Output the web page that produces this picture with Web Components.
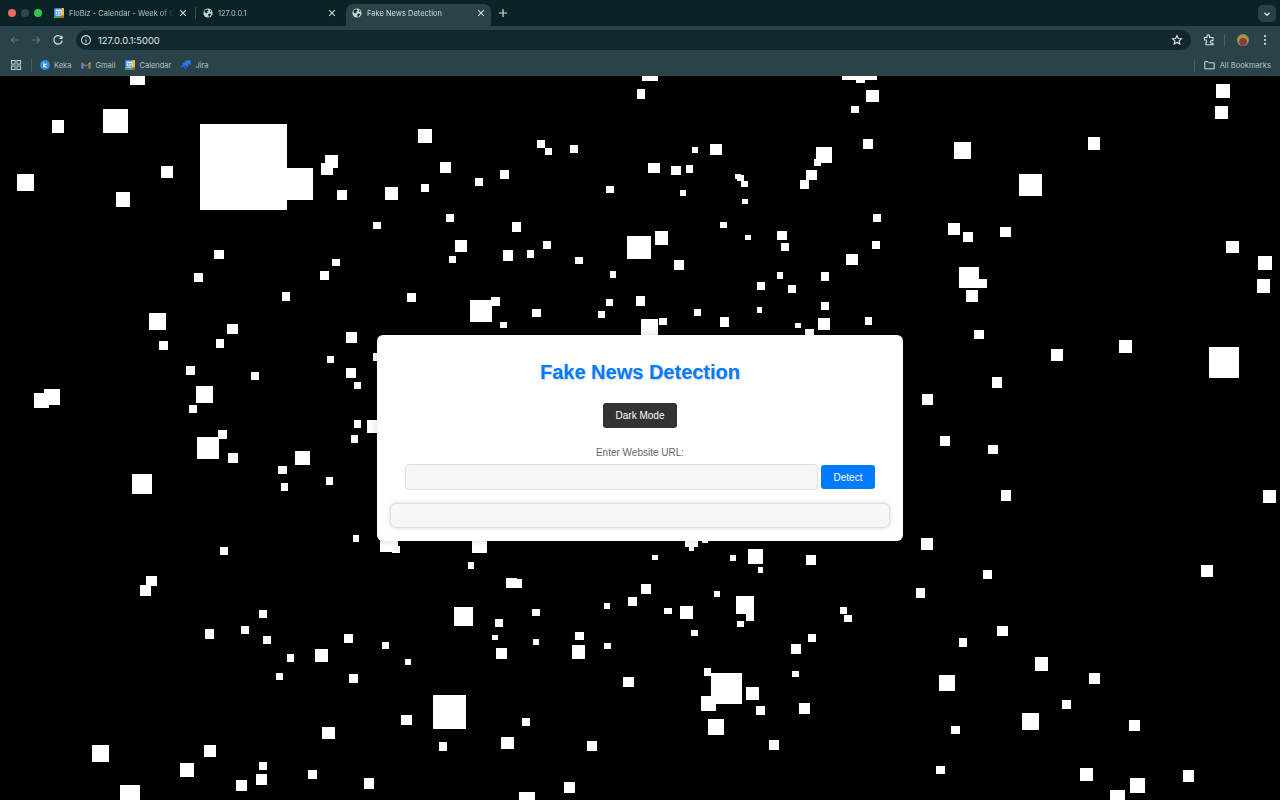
<!DOCTYPE html>
<html>
<head>
<meta charset="utf-8">
<title>Fake News Detection</title>
<style>
  html, body { margin: 0; padding: 0; height: 100%; background: #000; overflow: hidden; }
  body { font-family: "Liberation Sans", Arial, sans-serif; }
</style>
</head>
<body>
<browser-frame>
  <particle-field>
    <detect-card></detect-card>
  </particle-field>
</browser-frame>

<script>
const CALENDAR_ICON = `
  <svg viewBox="0 0 10 10" width="10" height="10">
    <rect width="10" height="10" rx="1" fill="#2f7cf0"/>
    <rect x="7.6" y="0" width="2.4" height="7.6" fill="#f4c20d"/>
    <rect x="0" y="7.6" width="7.6" height="2.4" fill="#34a853"/>
    <rect x="7.6" y="7.6" width="2.4" height="2.4" fill="#ea4335"/>
    <rect x="1.6" y="1.6" width="6" height="6" fill="#fff"/>
    <text x="4.6" y="6.6" font-size="5" font-weight="700" text-anchor="middle" fill="#2f6fd8" font-family="Liberation Sans">31</text>
  </svg>`;

const GLOBE_ICON = `
  <svg viewBox="0 0 10 10" width="10" height="10">
    <circle cx="5" cy="5" r="4.6" fill="#c9d2d4"/>
    <path d="M2 2.2 L4.6 1.2 L5.6 2.6 L4.2 3.8 L4.6 5 L3 5.2 L1.4 4 Z M5.2 6 L7.2 5.6 L8 6.6 L6.6 8.8 L5.6 8.4 Z M7 1.8 L8.6 3.6 L7.2 4 Z" fill="#0d2428"/>
  </svg>`;

class ChromeTab extends HTMLElement {
  constructor() {
    super();
    this.attachShadow({ mode: "open" });
  }

  connectedCallback() {
    this.shadowRoot.innerHTML = `
      <style>
        :host {
          display: flex;
          align-items: center;
          box-sizing: border-box;
          width: 145px;
          height: 22px;
          padding: 0 4px 4px 6px;
          color: #b7c2c4;
          font-size: 7.5px;
          border-radius: 7px 7px 0 0;
        }
        :host([active]) {
          background: #2a4348;
          color: #d6dedf;
        }
        .icon { width: 10px; height: 10px; flex: none; margin-right: 5px; }
        .title {
          flex: 1;
          white-space: nowrap;
          overflow: hidden;
          -webkit-mask-image: linear-gradient(90deg, #000 88%, transparent);
        }
        .close { flex: none; width: 12px; height: 12px; margin-left: 3px; }
      </style>
      <span class="icon">${this.getAttribute("icon") === "calendar" ? CALENDAR_ICON : GLOBE_ICON}</span>
      <span class="title"><slot></slot></span>
      <svg class="close" viewBox="0 0 12 12"><path d="M3.2 3.2 L8.8 8.8 M8.8 3.2 L3.2 8.8" stroke="#d5dcdd" stroke-width="1.1"/></svg>`;
  }
}

class BookmarkItem extends HTMLElement {
  constructor() {
    super();
    this.attachShadow({ mode: "open" });
  }

  connectedCallback() {
    this.shadowRoot.innerHTML = `
      <style>
        :host {
          display: flex;
          align-items: center;
          gap: 4px;
          color: #b7c2c4;
          font-size: 7.5px;
          white-space: nowrap;
        }
      </style>
      <slot name="icon"></slot>
      <slot></slot>`;
  }
}

class BrowserFrame extends HTMLElement {
  constructor() {
    super();
    this.attachShadow({ mode: "open" });
  }

  connectedCallback() {
    this.shadowRoot.innerHTML = `
      <style>
        :host {
          display: flex;
          flex-direction: column;
          width: 1280px;
          height: 800px;
          font-family: "Inter", "Liberation Sans", sans-serif;
        }
        .tabstrip {
          flex: none;
          height: 26px;
          box-sizing: border-box;
          padding: 4px 4px 0 8px;
          display: flex;
          align-items: flex-start;
          background: #0b2227;
        }
        .lights { display: flex; gap: 5px; width: 40px; padding-top: 5px; }
        .lights i { width: 8px; height: 8px; border-radius: 50%; }
        .tabs { display: flex; gap: 4px; }
        .sep { width: 1px; height: 12px; background: #3a4e52; margin: 3px -2.5px 0 -2.5px; align-self: flex-start; }
        .plus { margin: 2px 0 0 5px; width: 14px; height: 14px; }
        .more {
          margin: 1px 0 0 auto;
          width: 18px;
          height: 17px;
          border-radius: 5px;
          background: #2a4146;
          display: grid;
          place-items: center;
        }
        .toolbar {
          flex: none;
          height: 26px;
          box-sizing: border-box;
          padding: 2px 8px 0;
          display: flex;
          align-items: center;
          background: #2a4348;
        }
        .nav { display: flex; align-items: center; gap: 8px; width: 68px; }
        .nav svg { width: 14px; height: 14px; flex: none; }
        .omni {
          width: 1116px;
          height: 20px;
          border-radius: 10px;
          background: #10282d;
          display: flex;
          align-items: center;
          box-sizing: border-box;
          padding: 0 6px 0 4px;
          color: #e2e8e9;
          font-size: 9.4px;
        }
        .omni .info { width: 12px; height: 12px; margin-right: 6px; flex: none; }
        .omni .star { margin-left: auto; width: 12px; height: 12px; margin-right: 2px; }
        .actions { display: flex; align-items: center; margin-left: 11px; flex: none; }
        .bar-sep { width: 1px; height: 13px; background: #4a5f63; }
        .avatar { width: 12px; height: 12px; border-radius: 50%; background: radial-gradient(circle at 50% 65%, #8c3b45 0 35%, #b59a3c 45%, #5f7a4e 100%); }
        .bookmarks {
          flex: none;
          height: 24px;
          box-sizing: border-box;
          padding: 2px 9px 0 10px;
          display: flex;
          align-items: center;
          background: #2a4348;
        }
        .bookmarks .grid { width: 12px; height: 12px; flex: none; }
        .bookmarks .bar-sep { margin: 0 8px 0 9px; }
        .items { display: flex; gap: 10px; }
        .right { margin-left: auto; display: flex; align-items: center; }
        .right .bar-sep { margin: 0 9px 0 0; }
        .right .all { display: flex; align-items: center; gap: 5px; color: #b7c2c4; font-size: 7.6px; }
        main { flex: 1; min-height: 0; display: flex; }
        ::slotted(particle-field) { flex: 1; }
      </style>

      <div class="tabstrip">
        <div class="lights">
          <i style="background:#ec6a5e"></i>
          <i style="background:#33464a"></i>
          <i style="background:#3ec24f"></i>
        </div>
        <div class="tabs">
          <chrome-tab icon="calendar">FloBiz - Calendar - Week of October</chrome-tab>
          <div class="sep"></div>
          <chrome-tab>127.0.0.1</chrome-tab>
          <chrome-tab active>Fake News Detection</chrome-tab>
        </div>
        <svg class="plus" viewBox="0 0 14 14"><path d="M7 3 V11 M3 7 H11" stroke="#d5dcdd" stroke-width="1.2"/></svg>
        <div class="more">
          <svg width="10" height="10" viewBox="0 0 10 10"><path d="M2.5 3.8 L5 6.3 L7.5 3.8" fill="none" stroke="#e2e8e9" stroke-width="1.3"/></svg>
        </div>
      </div>

      <div class="toolbar">
        <div class="nav">
          <svg viewBox="0 0 14 14"><path d="M11 7 H3.5 M6.5 3.8 L3.3 7 L6.5 10.2" fill="none" stroke="#5f7377" stroke-width="1.2"/></svg>
          <svg viewBox="0 0 14 14" style="margin-left:-1px"><path d="M3 7 H10.5 M7.5 3.8 L10.7 7 L7.5 10.2" fill="none" stroke="#5f7377" stroke-width="1.2"/></svg>
          <svg viewBox="0 0 14 14"><path d="M10.8 5 A4.2 4.2 0 1 0 11.2 7.6 M11 2.8 V5.4 H8.4" fill="none" stroke="#d5dcdd" stroke-width="1.2"/></svg>
        </div>
        <div class="omni">
          <svg class="info" viewBox="0 0 12 12"><circle cx="6" cy="6" r="4.4" fill="none" stroke="#d5dcdd" stroke-width="1.1"/><path d="M6 5.4 V8.6 M6 3.4 V4.5" stroke="#d5dcdd" stroke-width="1.1"/></svg>
          <span>127.0.0.1:5000</span>
          <svg class="star" viewBox="0 0 12 12"><path d="M6 1.6 L7.3 4.5 L10.5 4.8 L8.1 6.9 L8.8 10 L6 8.4 L3.2 10 L3.9 6.9 L1.5 4.8 L4.7 4.5 Z" fill="none" stroke="#e2e8e9" stroke-width="1.1"/></svg>
        </div>
        <div class="actions">
          <svg width="14" height="14" viewBox="0 0 14 14"><path d="M2.5 4.5 H5 V3.2 A1.3 1.3 0 0 1 7.6 3.2 V4.5 H11 V7.6 H9.8 A1.3 1.3 0 0 0 9.8 10.2 H11 V11.8 H4 V9.6 A1.3 1.3 0 0 0 4 7.4 V7 H2.5 Z" fill="none" stroke="#d5dcdd" stroke-width="1.1"/></svg>
          <span class="bar-sep" style="margin:0 12px 0 8px"></span>
          <span class="avatar"></span>
          <svg width="14" height="14" viewBox="0 0 14 14" style="margin-left:9px"><circle cx="7" cy="3.2" r="1.1" fill="#d5dcdd"/><circle cx="7" cy="7" r="1.1" fill="#d5dcdd"/><circle cx="7" cy="10.8" r="1.1" fill="#d5dcdd"/></svg>
        </div>
      </div>

      <div class="bookmarks">
        <svg class="grid" viewBox="0 0 12 12" fill="none" stroke="#c9d2d4" stroke-width="1"><rect x="1.5" y="1.5" width="3.6" height="3.6"/><rect x="7" y="1.5" width="3.6" height="3.6"/><rect x="1.5" y="7" width="3.6" height="3.6"/><rect x="7" y="7" width="3.6" height="3.6"/></svg>
        <span class="bar-sep"></span>
        <div class="items">
          <bookmark-item>
            <svg slot="icon" width="10" height="10" viewBox="0 0 10 10"><circle cx="5" cy="5" r="5" fill="#2f8fd8"/><path d="M3.8 2.4 V7.6 M6.6 3.8 L3.9 5.6 L6.8 7.6" fill="none" stroke="#e8f3fb" stroke-width="1.1"/></svg>
            Keka
          </bookmark-item>
          <bookmark-item>
            <svg slot="icon" width="10" height="10" viewBox="0 0 10 10"><path d="M0.5 8.5 V2 L5 5.4 L9.5 2 V8.5 H7.6 V4.8 L5 6.8 L2.4 4.8 V8.5 Z" fill="#e8584b"/><path d="M0.5 8.5 V3 L2.4 4.4 V8.5 Z" fill="#4a8cf0"/><path d="M7.6 8.5 V4.4 L9.5 3 V8.5 Z" fill="#38a85a"/><path d="M7.6 3.4 L9.5 2 V3 L7.6 4.4 Z" fill="#f4c20d"/></svg>
            Gmail
          </bookmark-item>
          <bookmark-item>
            <span slot="icon" style="display:block;width:10px;height:10px">${CALENDAR_ICON}</span>
            Calendar
          </bookmark-item>
          <bookmark-item>
            <svg slot="icon" width="10" height="10" viewBox="0 0 10 10"><path d="M5 0.5 H9.5 V5 A2 2 0 0 1 7.5 3 H5.5 A1.2 1.2 0 0 1 5 0.5 Z" fill="#2684ff"/><path d="M2.8 2.8 H7.2 V7.2 A2 2 0 0 1 5.2 5.2 H3.2 A1.2 1.2 0 0 1 2.8 2.8 Z" fill="#2f78e8"/><path d="M0.5 5 H5 V9.5 A2 2 0 0 1 3 7.5 H1 A1.2 1.2 0 0 1 0.5 5 Z" fill="#1f5fc8"/></svg>
            Jira
          </bookmark-item>
        </div>
        <div class="right">
          <span class="bar-sep"></span>
          <div class="all">
            <svg width="11" height="10" viewBox="0 0 11 10"><path d="M0.8 1.6 H4 L5 2.8 H10.2 V8.8 H0.8 Z" fill="none" stroke="#d5dcdd" stroke-width="1"/></svg>
            All Bookmarks
          </div>
        </div>
      </div>

      <main><slot></slot></main>`;
  }
}

// x, y, w, h of each square, in page coordinates
const SQUARES = `130,70,15,15 52,120,12,13 103,109,25,24 200,124,87,86 281,168,32,32 325,155,13,13 321,163,12,12
337,190,10,10 161,166,12,12 17,174,17,17 116,192,14,15 418,129,14,14 440,162,11,11 385,187,13,13 421,184,8,8
475,178,8,8 500,170,9,9 537,140,8,8 545,148,7,7 570,145,8,8 606,186,8,7 373,222,8,7 446,214,8,8 512,222,9,10
455,240,12,12 449,256,7,7 503,250,10,11 527,250,7,8 543,241,8,8 575,257,8,7 627,236,24,23 610,271,6,7 214,250,10,9
194,273,9,9 332,259,8,7 320,271,9,9 282,292,8,9 407,293,9,9 470,300,22,22 491,297,9,9 500,322,7,6 532,309,9,8
606,299,7,7 598,311,7,7 636,296,9,10 149,313,17,17 227,324,11,10 346,332,11,11 637,89,8,10
642,70,16,11 842,72,35,8 856,76,9,7 866,90,13,12 851,106,8,7 1216,84,14,14 1215,106,13,13 863,139,10,10
1088,137,12,13 954,142,17,17 692,147,6,6 710,144,12,11 816,147,16,16 814,159,7,7 648,163,12,10 671,166,10,9
686,165,7,8 806,170,11,10 800,180,9,9 735,174,6,5 737,175,7,6 741,181,7,6 680,190,6,6 742,199,6,5 1019,174,23,22
873,214,8,8 720,222,7,6 745,235,6,5 948,223,12,12 963,232,10,10 1000,227,11,10 655,231,13,14 777,231,10,9
781,243,8,8 872,241,8,8 1226,241,13,12 846,254,12,11 674,260,10,10 1258,256,14,14 959,267,20,21 977,279,10,9
966,290,12,12 1257,279,13,14 777,272,6,7 821,272,8,9 757,282,8,8 788,285,8,8 821,302,8,8 694,309,7,7 757,307,5,6
720,317,9,10 659,318,8,7 641,319,17,17 795,323,6,5 818,318,12,12 865,317,7,8 805,329,9,7 974,330,10,9
159,341,9,9 216,339,8,9 186,366,9,9 251,372,8,8 196,386,17,17 189,405,8,8 44,389,16,16 34,393,15,15 218,430,9,9
197,437,22,22 228,453,10,10 295,451,15,14 278,466,9,8 281,483,7,8 326,477,7,8 132,474,20,20 327,356,7,7
346,368,10,10 354,382,7,7 354,420,7,8 367,420,11,13 351,435,7,8 373,353,9,8 353,535,6,7 220,547,8,8
1051,349,12,12 1119,340,13,13 1209,347,30,31 992,377,10,11 922,394,11,11 940,436,10,10 988,445,10,9 1001,490,10,11
1263,490,13,13 921,538,12,12 1201,565,12,12 380,535,18,17 392,546,8,7 472,535,15,18 468,562,6,7 506,578,11,10
512,579,10,9 146,576,11,10 140,585,11,11 259,610,8,8 454,607,19,19 532,609,8,7 495,619,8,8 492,635,6,5 533,639,6,6
496,648,11,11 604,603,6,6 628,597,9,9 575,632,9,8 572,645,13,14 604,643,7,6 205,629,9,10 241,626,8,8 263,636,8,8
344,634,9,9 287,654,7,8 315,649,13,13 382,642,7,7 405,659,6,6 276,673,7,7 349,674,9,9 623,677,11,10 433,695,33,34
401,715,11,10 522,718,8,8 322,727,13,12 439,742,8,9 501,737,13,12 587,741,10,10 92,745,17,17 204,745,12,12
180,763,14,14 259,762,8,8 256,774,11,11 236,780,11,11 308,770,9,9 364,778,10,11 120,785,20,16 519,792,16,9 564,782,11,11
685,535,13,12 689,547,5,4 702,535,6,8 652,555,6,5 730,555,6,6 748,549,15,15 806,555,10,10 758,567,5,6 983,570,9,9
641,584,10,10 714,591,6,6 916,588,9,10 736,596,18,18 746,610,8,11 664,608,8,6 680,606,13,13 737,621,7,6 691,630,7,6
840,607,7,7 844,615,8,7 997,626,11,10 959,638,8,9 808,634,8,8 791,644,10,10 1035,657,13,14 792,671,7,6 1089,673,11,11
939,675,16,16 704,668,7,8 711,673,31,31 701,696,15,15 746,687,13,13 756,706,9,9 799,703,11,11 1062,700,9,9
1022,713,17,17 708,719,16,16 1129,720,11,11 951,726,9,8 769,740,10,10 936,766,9,8 1080,768,13,13 1183,770,11,12
1130,778,15,15 1110,790,15,11`;

class ParticleField extends HTMLElement {
  constructor() {
    super();
    this.attachShadow({ mode: "open" });
  }

  connectedCallback() {
    const rects = SQUARES.trim().split(/\s+/).map((entry) => {
      const [x, y, w, h] = entry.split(",");
      return `<rect x="${x}" y="${y}" width="${w}" height="${h}"/>`;
    }).join("");

    this.shadowRoot.innerHTML = `
      <style>
        :host {
          display: grid;
          place-items: center;
          position: relative;
          overflow: hidden;
          background: #000;
        }
        svg {
          position: absolute;
          left: 0;
          top: -76px;
          width: 1280px;
          height: 800px;
        }
        ::slotted(*) { position: relative; }
      </style>
      <svg viewBox="0 0 1280 800" fill="#fff" shape-rendering="crispEdges">${rects}</svg>
      <slot></slot>`;
  }
}

class DetectCard extends HTMLElement {
  constructor() {
    super();
    this.attachShadow({ mode: "open" });
  }

  connectedCallback() {
    this.shadowRoot.innerHTML = `
      <style>
        :host {
          display: flex;
          flex-direction: column;
          align-items: center;
          box-sizing: border-box;
          width: 526px;
          height: 206px;
          padding: 25px 13px 13px;
          background: #fff;
          border-radius: 6px;
          box-shadow: 0 0 8px rgba(0, 0, 0, 0.15);
          font-family: "Liberation Sans", Arial, sans-serif;
        }
        h1 {
          margin: 0;
          font-size: 20px;
          line-height: 25px;
          font-weight: 700;
          color: #007bff;
          text-shadow: 1px 1px 2px rgba(0, 0, 0, 0.2);
        }
        button {
          border: 0;
          font: inherit;
          font-size: 10px;
          color: #fff;
          border-radius: 3px;
          padding: 0;
        }
        .mode {
          margin-top: 18px;
          width: 74px;
          height: 25px;
          background: #333;
        }
        label {
          margin-top: 18px;
          font-size: 10px;
          line-height: 13px;
          color: #666;
        }
        .row {
          margin-top: 5px;
          display: flex;
          align-items: center;
          gap: 3px;
          width: 470px;
        }
        input {
          flex: 1;
          min-width: 0;
          box-sizing: border-box;
          height: 26px;
          padding: 0 8px;
          border: 1px solid #ddd;
          border-radius: 4px;
          background: #f7f7f7;
          outline: none;
        }
        .detect {
          flex: none;
          width: 54px;
          height: 24px;
          background: #007bff;
        }
        .result {
          margin-top: 13px;
          box-sizing: border-box;
          width: 100%;
          height: 25px;
          border: 1px solid #e0e0e0;
          border-radius: 6px;
          background: #f7f7f7;
          box-shadow: 0 0 5px rgba(0, 0, 0, 0.15);
        }
      </style>
      <h1>Fake News Detection</h1>
      <button class="mode">Dark Mode</button>
      <label for="url">Enter Website URL:</label>
      <div class="row">
        <input id="url" type="text">
        <button class="detect">Detect</button>
      </div>
      <div class="result"></div>`;
  }
}

customElements.define("chrome-tab", ChromeTab);
customElements.define("bookmark-item", BookmarkItem);
customElements.define("browser-frame", BrowserFrame);
customElements.define("particle-field", ParticleField);
customElements.define("detect-card", DetectCard);
</script>
</body>
</html>
